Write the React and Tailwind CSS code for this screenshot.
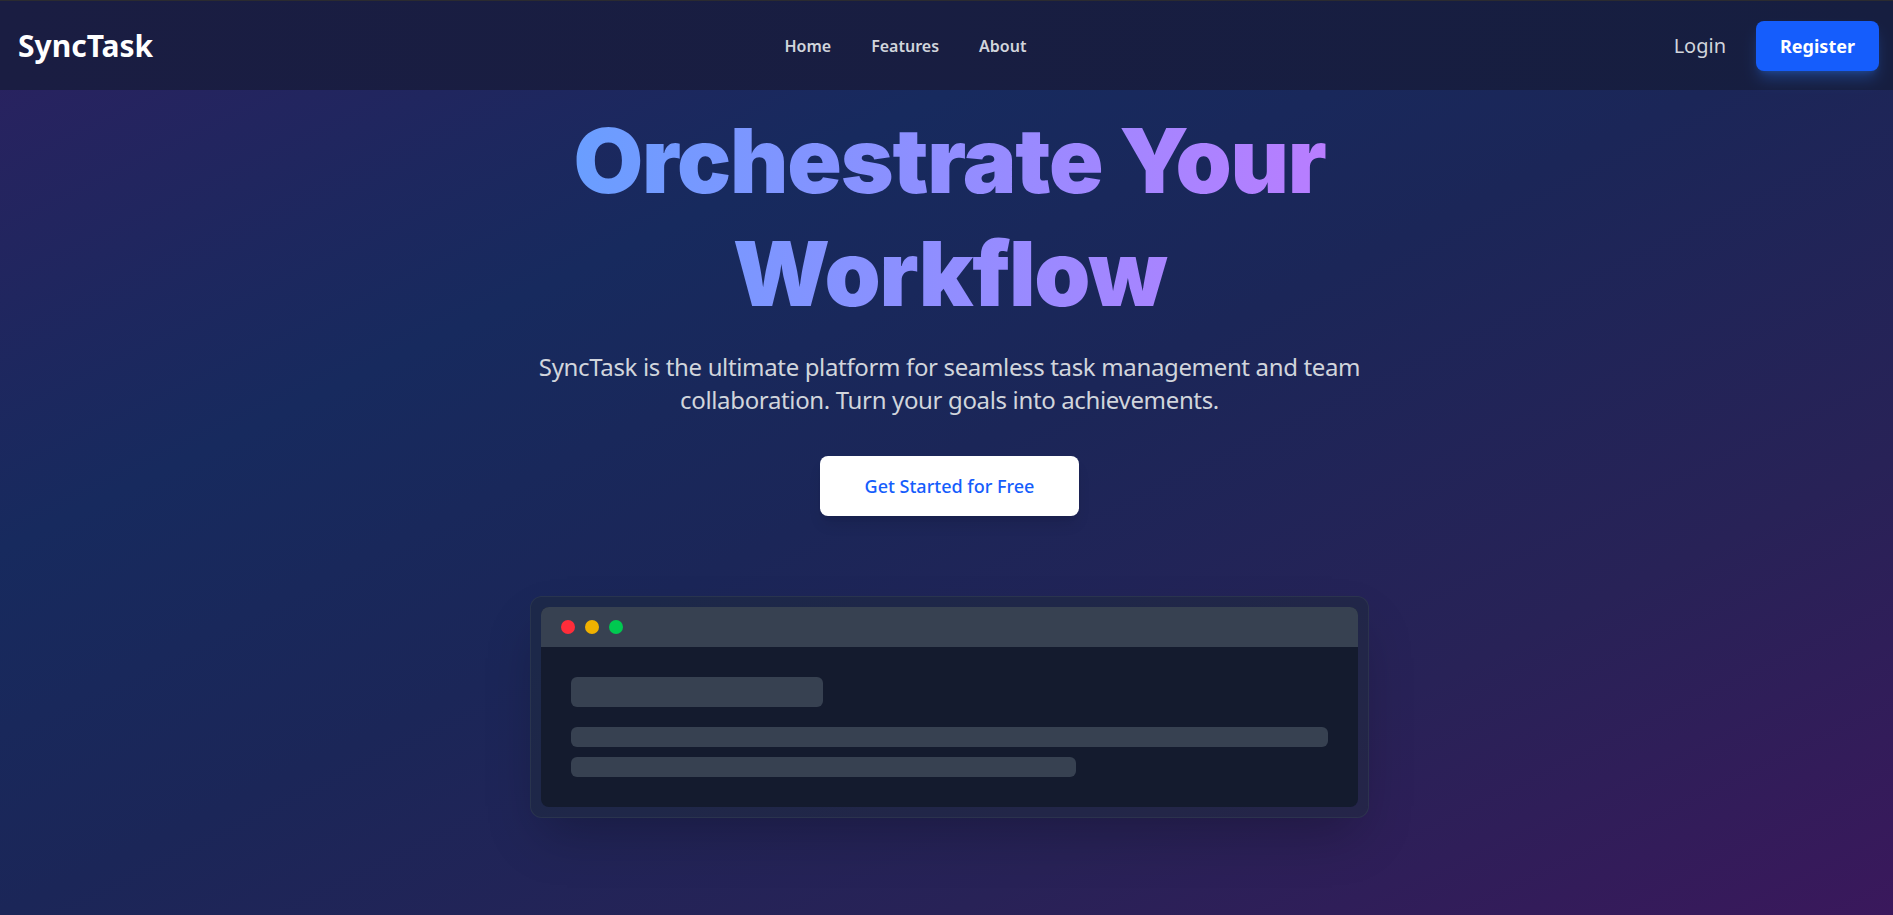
import React from 'react';

const NavLinks = ['Home', 'Features', 'About'];

const App = () => {
  return (
    <div className="min-h-screen overflow-hidden bg-[linear-gradient(to_bottom_right,#2b2160_0%,#172a5e_30%,#1b2658_50%,#282257_75%,#3a185c_100%)] font-['Noto_Sans',sans-serif]">
      {/* Navbar */}
      <nav className="flex h-[90px] items-center justify-between border-t border-[#2b2b30] bg-[linear-gradient(to_right,#1a1d42,#161e40)] pl-[18px] pr-3.5">
        <a href="#" className="text-3xl font-bold text-white">SyncTask</a>
        <div className="mr-4 flex items-center gap-10 text-base font-semibold text-gray-300">
          {NavLinks.map((l) => (
            <a key={l} href="#">{l}</a>
          ))}
        </div>
        <div className="flex items-center gap-7.5">
          <a href="#" className="text-xl text-gray-300">Login</a>
          <a href="#" className="rounded-lg bg-blue-600 px-6 py-3 text-lg font-bold leading-[26px] text-white shadow-lg shadow-blue-500/30">Register</a>
        </div>
      </nav>

      {/* Hero */}
      <main className="flex flex-col items-center pl-1.5 text-center">
        <h1 className="mt-3.5 w-full max-w-4xl bg-[linear-gradient(to_right,#62a1ff,#c07aff)] bg-clip-text font-['Inter',sans-serif] text-[90px] font-black leading-[113px] tracking-[-1.2px] text-transparent">
          Orchestrate Your Workflow
        </h1>
        <p className="mt-5 max-w-4xl text-2xl leading-[33px] tracking-[-0.35px] text-gray-300">
          SyncTask is the ultimate platform for seamless task management and team collaboration. Turn your goals into achievements.
        </p>
        <a href="#" className="mt-10 rounded-lg bg-white px-[45px] py-4 text-lg font-medium text-blue-600 shadow-lg">
          Get Started for Free
        </a>

        {/* App preview */}
        <div className="mt-20 w-[839px] rounded-xl border border-gray-700/50 bg-gray-800/50 p-2.5 shadow-2xl">
          <div className="overflow-hidden rounded-lg bg-[#141b2e]">
            <div className="flex h-10 items-center gap-2.5 bg-[#374151] px-5">
              <span className="h-3.5 w-3.5 rounded-full bg-[#ff2d3a]" />
              <span className="h-3.5 w-3.5 rounded-full bg-[#f0b100]" />
              <span className="h-3.5 w-3.5 rounded-full bg-[#00c950]" />
            </div>
            <div className="p-7.5">
              <div className="mb-5 h-[30px] w-1/3 rounded-md bg-[#374151]" />
              <div className="mb-2.5 h-5 w-full rounded-md bg-[#374151]" />
              <div className="h-5 w-2/3 rounded-md bg-[#374151]" />
            </div>
          </div>
        </div>
      </main>
    </div>
  );
};

export default App;
